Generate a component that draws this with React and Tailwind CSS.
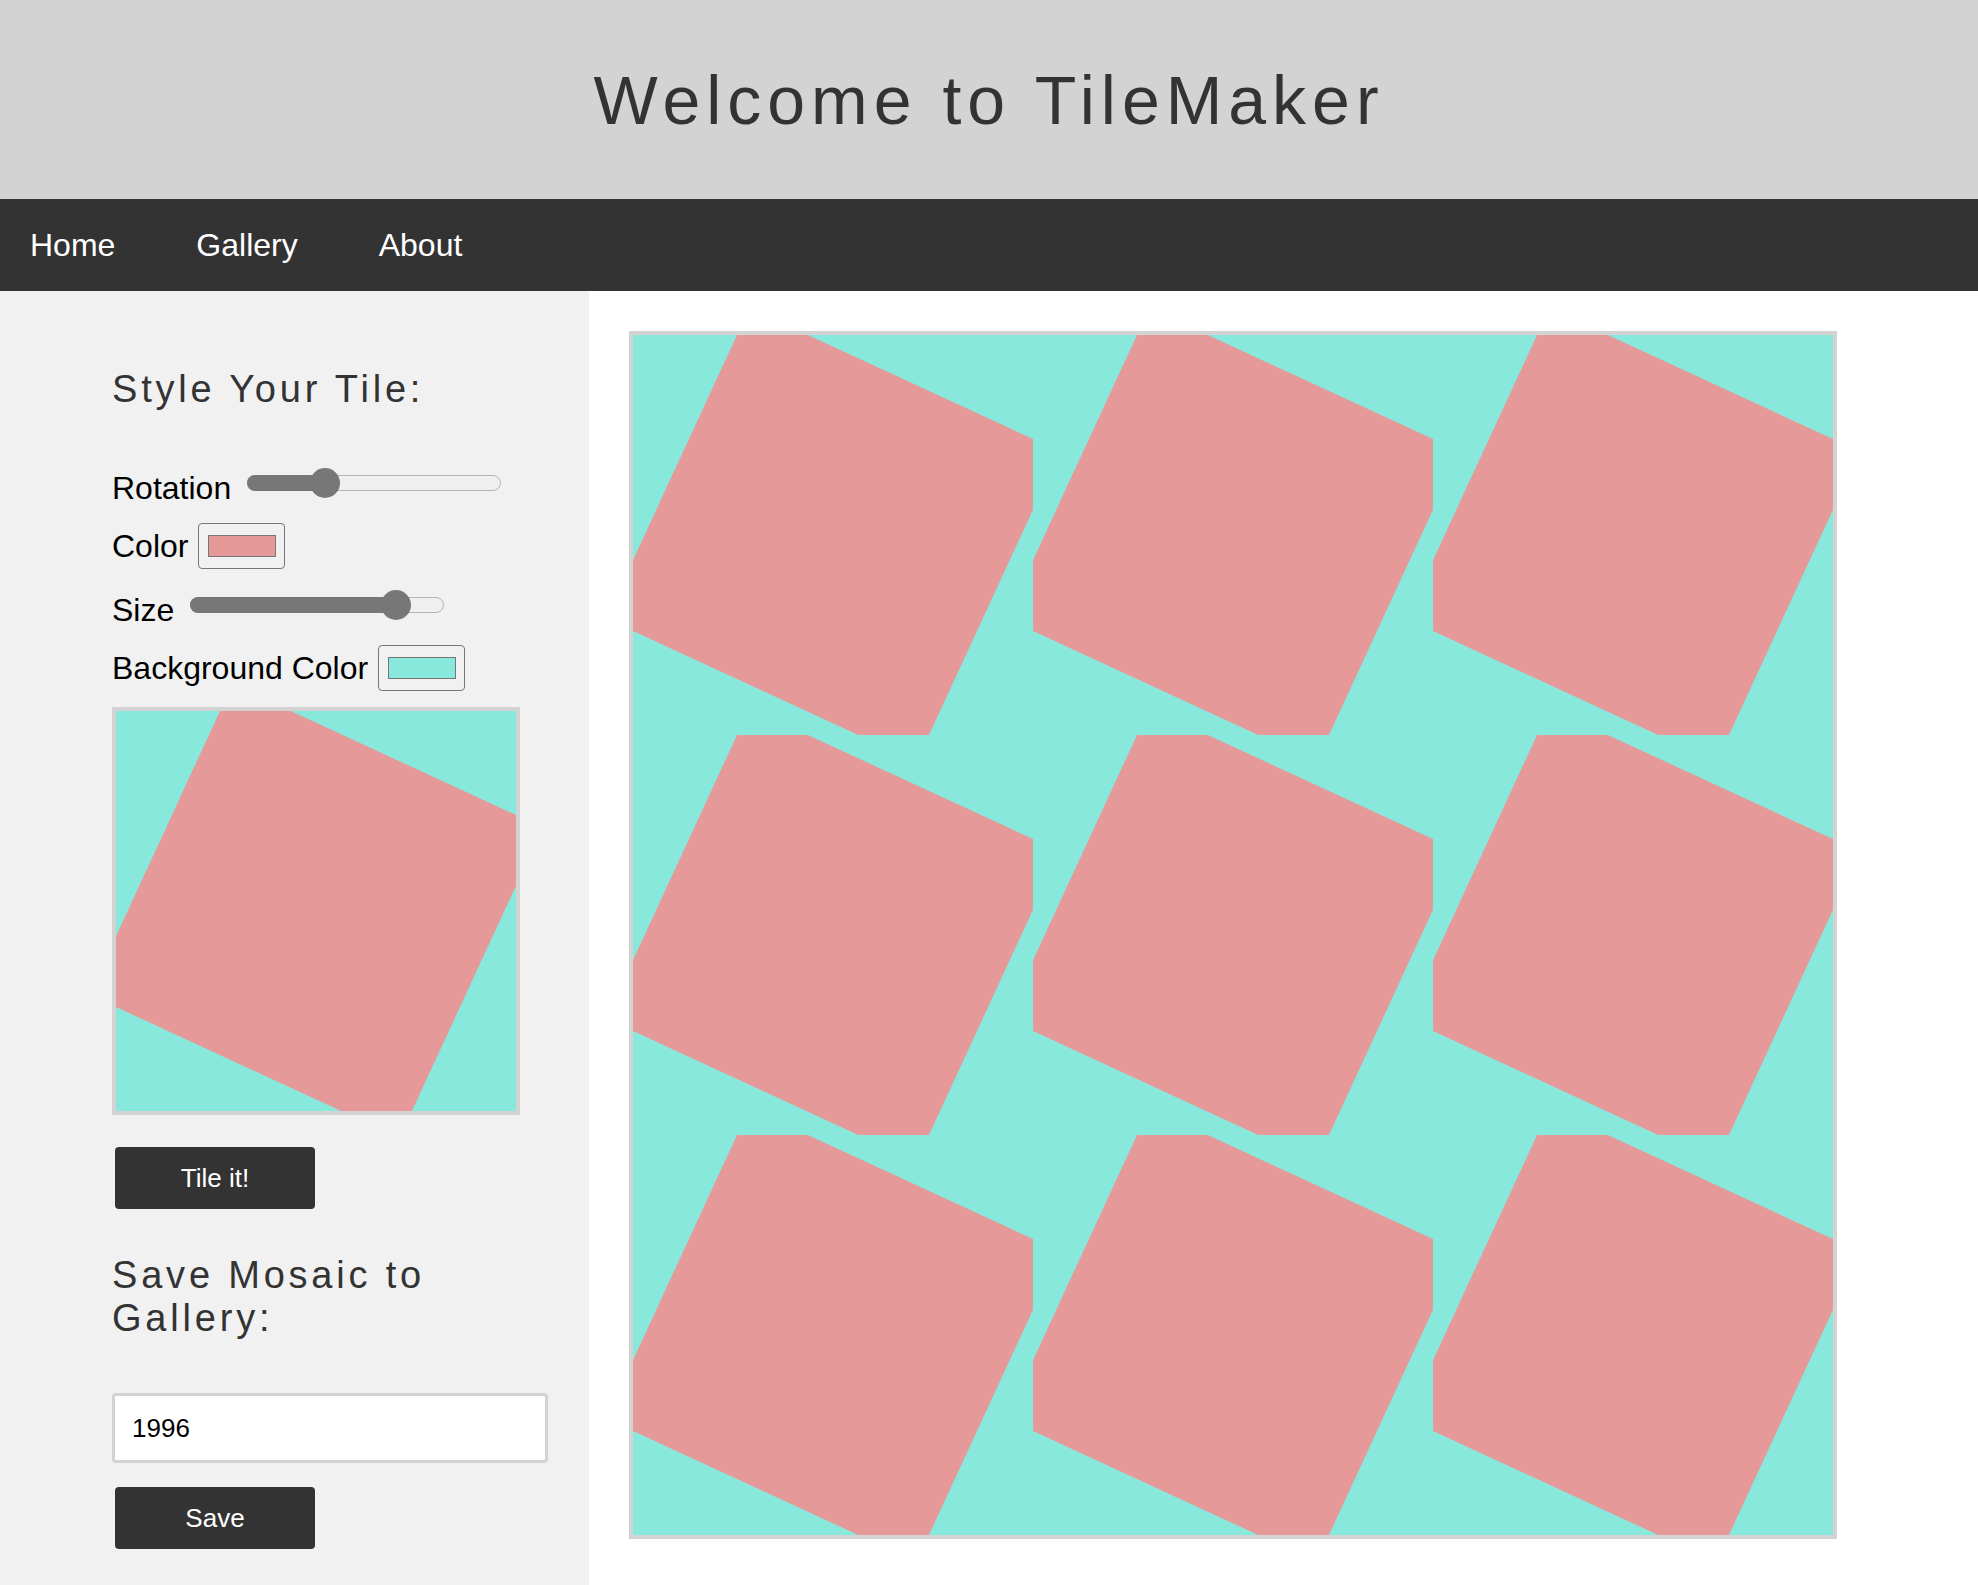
import React from 'react';

const PINK = '#e59999';
const TEAL = '#88e8dc';

// one tile: a square turned inside a clipped 400x400 cell
const Tile = () => (
  <svg width="400" height="400" viewBox="0 0 400 400" className="block">
    <rect x="0" y="0" width="400" height="400" fill={TEAL} />
    <rect x="29" y="29" width="342" height="342" fill={PINK} transform="rotate(24.8 200 200)" />
  </svg>
);

const Slider = ({ value }) => {
  const width = 254;
  const left = value * (width - 30);
  return (
    <div className="relative w-[254px] h-[30px] ml-[16px] mb-[10px]">
      <div className="absolute left-0 right-0 top-[7px] h-[16px] rounded-full border border-[#b3b3b3] bg-[#efefef]"></div>
      <div className="absolute left-0 top-[7px] h-[16px] rounded-full bg-[#777777]" style={{ width: left + 15 }}></div>
      <div className="absolute top-0 w-[30px] h-[30px] rounded-full bg-[#777777]" style={{ left }}></div>
    </div>
  );
};

const ColorBox = ({ color }) => (
  <div className="ml-[10px] w-[87px] h-[46px] border border-[#767676] rounded-[4px] flex items-center justify-center">
    <div className="w-[68px] h-[22px] border border-[#777777]" style={{ background: color }}></div>
  </div>
);

const App = () => {
  return (
    <div className="min-h-screen flex flex-col font-['Liberation_Sans',Arial,sans-serif]">
      {/* Header */}
      <header className="h-[199px] bg-[#d3d3d3] flex items-center justify-center">
        <h1 className="text-[68px] leading-none tracking-[0.088em] text-[#333333] font-normal">
          Welcome to TileMaker
        </h1>
      </header>

      {/* Nav */}
      <nav className="h-[92px] bg-[#333333] flex items-center pl-[30px] gap-[81px] text-[32px] leading-none text-white">
        <a href="#">Home</a>
        <a href="#">Gallery</a>
        <a href="#">About</a>
      </nav>

      <div className="flex flex-1">
        {/* Sidebar */}
        <aside className="w-[589px] shrink-0 bg-[#f1f1f1] pl-[112px] pt-[77px] pb-[36px] flex flex-col">
          <h2 className="text-[38px] leading-[43px] tracking-[0.1em] text-[#333333] font-normal">
            Style Your Tile:
          </h2>

          <div className="mt-[54px] h-[46px] flex items-center text-[32px] leading-none text-black">
            <span>Rotation</span>
            <Slider value={0.28} />
          </div>
          <div className="mt-[12px] h-[46px] flex items-center text-[32px] leading-none text-black">
            <span>Color</span>
            <ColorBox color={PINK} />
          </div>
          <div className="mt-[18px] h-[46px] flex items-center text-[32px] leading-none text-black">
            <span>Size</span>
            <Slider value={0.85} />
          </div>
          <div className="mt-[12px] h-[46px] flex items-center text-[32px] leading-none text-black">
            <span>Background Color</span>
            <ColorBox color={TEAL} />
          </div>

          {/* Preview */}
          <div className="mt-[16px] w-[408px] h-[408px] border-4 border-[#d3d3d3]">
            <Tile />
          </div>

          <button className="mt-[32px] ml-[3px] w-[200px] h-[62px] bg-[#333333] text-white text-[26px] rounded-[4px]">
            Tile it!
          </button>

          <h2 className="mt-[45px] w-[436px] text-[38px] leading-[43px] tracking-[0.1em] text-[#333333] font-normal">
            Save Mosaic to Gallery:
          </h2>

          <input
            defaultValue="1996"
            className="mt-[53px] w-[436px] h-[70px] border-[3px] border-[#d3d3d3] rounded-[4px] bg-white px-[17px] text-[26px] text-black outline-none"
          />

          <button className="mt-[24px] ml-[3px] w-[200px] h-[62px] bg-[#333333] text-white text-[26px] rounded-[4px]">
            Save
          </button>
        </aside>

        {/* Mosaic */}
        <main className="flex-1 bg-white pt-[40px] pl-[40px]">
          <div className="w-[1208px] h-[1208px] border-4 border-[#d3d3d3] grid grid-cols-3">
            {Array.from({ length: 9 }).map((_, i) => (
              <Tile key={i} />
            ))}
          </div>
        </main>
      </div>
    </div>
  );
};

export default App;
